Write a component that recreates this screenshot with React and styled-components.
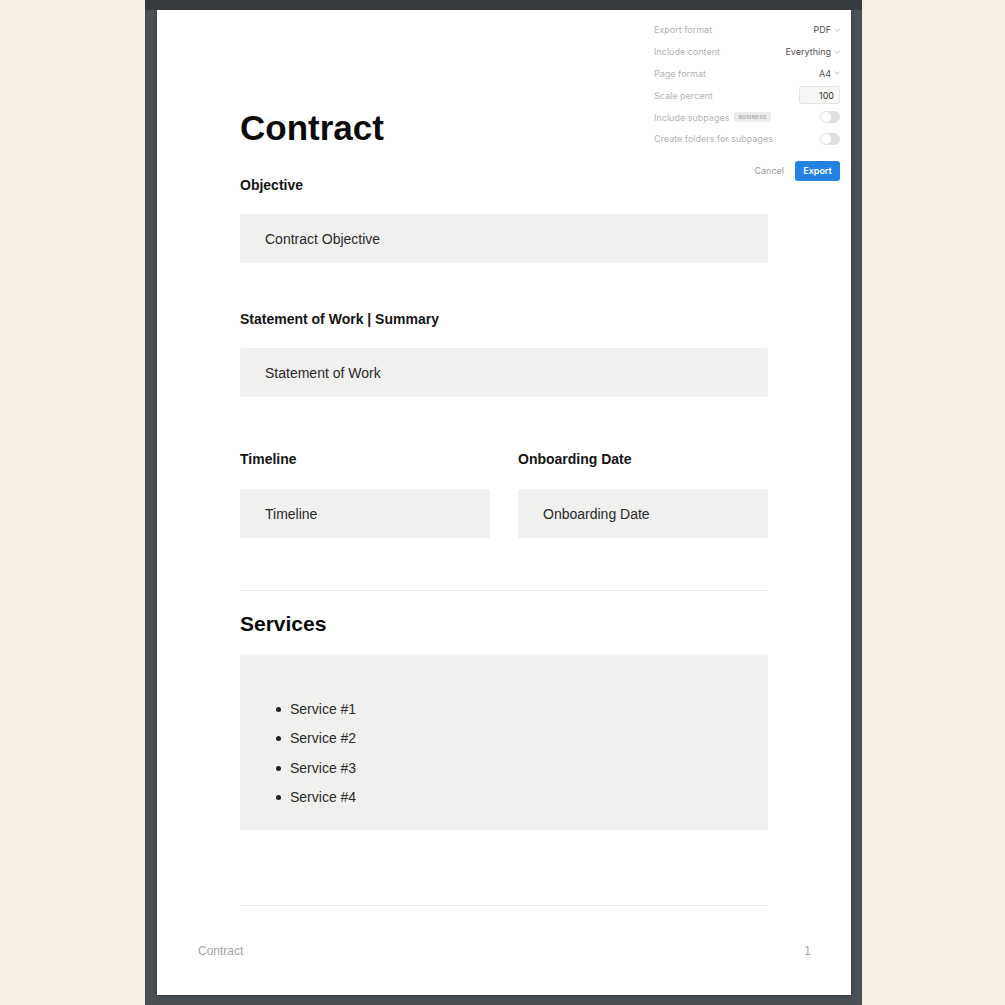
import React from "react";
import styled, { createGlobalStyle } from "styled-components";

const GlobalStyle = createGlobalStyle`
  html, body {
    margin: 0;
    padding: 0;
    background: #f6ede3;
    overflow: hidden;
  }
  * { box-sizing: border-box; }
`;

const Viewer = styled.div`
  width: 717px;
  height: 1005px;
  margin-left: 145px;
  background: #4b5054;
  display: flex;
  flex-direction: column;
`;

const TopStrip = styled.div`
  height: 10px;
  background: #363b3f;
`;

const Stage = styled.div`
  flex: 1;
  padding: 0 11px 10px 12px;
  display: flex;
`;

const Page = styled.div`
  position: relative;
  flex: 1;
  background: #fff;
  box-shadow: 0 1px 3px rgba(0, 0, 0, 0.35);
  display: flex;
  flex-direction: column;
  font-family: "Liberation Sans", Arial, sans-serif;
  color: #111;
`;

const Content = styled.div`
  margin: 0 83px;
  padding-top: 98px;
  display: flex;
  flex-direction: column;
`;

const Title = styled.h1`
  margin: 0;
  font-size: 35px;
  line-height: 40px;
  font-weight: 700;
  color: #0b0b0b;
`;

const Label = styled.div`
  font-size: 14px;
  line-height: 20px;
  font-weight: 700;
  margin-top: ${(p) => p.$top}px;
  color: #151515;
`;

const Field = styled.div`
  margin-top: ${(p) => p.$top || 19}px;
  height: 49px;
  background: #f0f0ef;
  border-radius: 2px;
  padding-left: 25px;
  display: flex;
  align-items: center;
  font-size: 14px;
  color: #2a2a2a;
`;

const Columns = styled.div`
  display: grid;
  grid-template-columns: 1fr 1fr;
  column-gap: 28px;
  margin-top: 52px;
`;

const Column = styled.div`
  display: flex;
  flex-direction: column;
`;

const Divider = styled.hr`
  margin: ${(p) => p.$top}px 0 0;
  border: none;
  border-top: 1px solid #ececec;
  height: 0;
`;

const SectionTitle = styled.h2`
  margin: 19px 0 0;
  font-size: 21px;
  line-height: 28px;
  font-weight: 700;
  color: #0b0b0b;
`;

const ListBox = styled.div`
  margin-top: 17px;
  height: 175px;
  background: #f0f0ef;
  border-radius: 2px;
  padding: 44px 0 0 50px;
`;

const List = styled.ul`
  margin: 0;
  padding: 0;
  list-style: none;
  display: flex;
  flex-direction: column;
  gap: 9.3px;
`;

const Item = styled.li`
  position: relative;
  font-size: 14px;
  line-height: 20px;
  color: #2a2a2a;

  &::before {
    content: "";
    position: absolute;
    left: -14px;
    top: 8px;
    width: 5px;
    height: 5px;
    border-radius: 50%;
    background: #222;
  }
`;

const Footer = styled.div`
  margin-top: 37px;
  padding: 0 40px 0 41px;
  display: flex;
  justify-content: space-between;
  font-size: 12px;
  line-height: 16px;
  color: #a3a3a3;
`;

/* export popover */

const Panel = styled.div`
  position: absolute;
  top: 9px;
  right: 11px;
  width: 186px;
  font-family: Inter, "Noto Sans", sans-serif;
  font-size: 9px;
  background: #fff;
`;

const Row = styled.div`
  height: 21.8px;
  display: flex;
  align-items: center;
  justify-content: space-between;
`;

const RowLabel = styled.span`
  color: #b3b3b3;
  display: flex;
  align-items: center;
  gap: 5px;
`;

const Value = styled.span`
  color: #505050;
  display: flex;
  align-items: center;
  gap: 3px;
`;

const Chevron = () => (
  <svg width="6" height="4" viewBox="0 0 6 4">
    <path d="M0.5 0.8 L3 3.2 L5.5 0.8" fill="none" stroke="#b5b5b5" strokeWidth="0.9" />
  </svg>
);

const NumberBox = styled.div`
  width: 41px;
  height: 18px;
  border: 1px solid #e4e4e2;
  background: #f7f7f5;
  border-radius: 3px;
  display: flex;
  align-items: center;
  justify-content: flex-end;
  padding-right: 5px;
  color: #333;
`;

const Badge = styled.span`
  background: #ebebeb;
  color: #a8a8a8;
  font-size: 5px;
  font-weight: 600;
  letter-spacing: 0.4px;
  padding: 2px 4px;
  border-radius: 2px;
`;

const Toggle = styled.span`
  position: relative;
  width: 20px;
  height: 12px;
  border-radius: 6px;
  background: #e0e0e0;

  &::after {
    content: "";
    position: absolute;
    left: 1px;
    top: 1px;
    width: 10px;
    height: 10px;
    border-radius: 50%;
    background: #fff;
  }
`;

const Actions = styled.div`
  margin-top: 11px;
  display: flex;
  justify-content: flex-end;
  align-items: center;
  gap: 11px;
`;

const CancelButton = styled.button`
  border: none;
  background: none;
  padding: 0;
  font: inherit;
  color: #9a9a9a;
`;

const ExportButton = styled.button`
  border: none;
  width: 45px;
  height: 20px;
  border-radius: 3px;
  background: #2383e2;
  color: #fff;
  font: inherit;
  font-weight: 600;
`;

export default function App() {
  return (
    <>
      <GlobalStyle />
      <Viewer>
        <TopStrip />
        <Stage>
          <Page>
            <Content>
              <Title>Contract</Title>
              <Label $top={27}>Objective</Label>
              <Field>Contract Objective</Field>

              <Label $top={46}>Statement of Work | Summary</Label>
              <Field>Statement of Work</Field>

              <Columns>
                <Column>
                  <Label $top={0}>Timeline</Label>
                  <Field $top={20}>Timeline</Field>
                </Column>
                <Column>
                  <Label $top={0}>Onboarding Date</Label>
                  <Field $top={20}>Onboarding Date</Field>
                </Column>
              </Columns>

              <Divider $top={52} />
              <SectionTitle>Services</SectionTitle>
              <ListBox>
                <List>
                  <Item>Service #1</Item>
                  <Item>Service #2</Item>
                  <Item>Service #3</Item>
                  <Item>Service #4</Item>
                </List>
              </ListBox>
              <Divider $top={75} />
            </Content>
            <Footer>
              <span>Contract</span>
              <span>1</span>
            </Footer>

            <Panel>
              <Row>
                <RowLabel>Export format</RowLabel>
                <Value>PDF <Chevron /></Value>
              </Row>
              <Row>
                <RowLabel>Include content</RowLabel>
                <Value>Everything <Chevron /></Value>
              </Row>
              <Row>
                <RowLabel>Page format</RowLabel>
                <Value>A4 <Chevron /></Value>
              </Row>
              <Row>
                <RowLabel>Scale percent</RowLabel>
                <NumberBox>100</NumberBox>
              </Row>
              <Row>
                <RowLabel>
                  Include subpages <Badge>BUSINESS</Badge>
                </RowLabel>
                <Toggle />
              </Row>
              <Row>
                <RowLabel>Create folders for subpages</RowLabel>
                <Toggle />
              </Row>
              <Actions>
                <CancelButton>Cancel</CancelButton>
                <ExportButton>Export</ExportButton>
              </Actions>
            </Panel>
          </Page>
        </Stage>
      </Viewer>
    </>
  );
}
